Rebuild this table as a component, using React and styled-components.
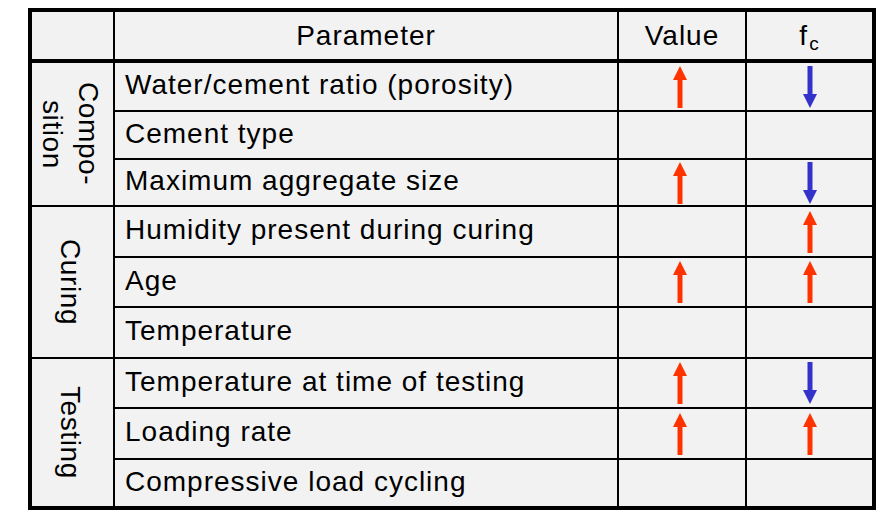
import React from "react";
import styled, { createGlobalStyle } from "styled-components";

const GlobalStyle = createGlobalStyle`
  body {
    margin: 0;
    background: #ffffff;
    font-family: "Liberation Sans", Arial, sans-serif;
    color: #000000;
  }
`;

const groups = [
  {
    label: ["Compo-", "sition"],
    rows: [
      ["Water/cement ratio (porosity)", "up", "down"],
      ["Cement type", null, null],
      ["Maximum aggregate size", "up", "down"],
    ],
  },
  {
    label: ["Curing"],
    rows: [
      ["Humidity present during curing", null, "up"],
      ["Age", "up", "up"],
      ["Temperature", null, null],
    ],
  },
  {
    label: ["Testing"],
    rows: [
      ["Temperature at time of testing", "up", "down"],
      ["Loading rate", "up", "up"],
      ["Compressive load cycling", null, null],
    ],
  },
];

// arrows are drawn shapes: up = red, down = blue
function Arrow({ dir }) {
  if (dir === "up") {
    return (
      <svg width="14" height="42" viewBox="0 0 14 42">
        <polygon points="7,0 14,14 0,14" fill="#ff3300" />
        <rect x="4.5" y="13" width="5" height="29" fill="#ff3300" />
      </svg>
    );
  }
  return (
    <svg width="14" height="42" viewBox="0 0 14 42">
      <rect x="4.5" y="0" width="5" height="29" fill="#3333cc" />
      <polygon points="0,28 14,28 7,42" fill="#3333cc" />
    </svg>
  );
}

export default function App() {
  return (
    <>
      <GlobalStyle />
      <Frame>
        <HeadCell />
        <HeadCell>Parameter</HeadCell>
        <HeadCell>Value</HeadCell>
        <HeadCell>
          f<Sub>c</Sub>
        </HeadCell>
        {groups.map((g) => (
          <React.Fragment key={g.label.join("")}>
            <GroupCell>
              <GroupLabel>
                {g.label.map((l, i) => (
                  <React.Fragment key={l}>
                    {i > 0 && <br />}
                    {l}
                  </React.Fragment>
                ))}
              </GroupLabel>
            </GroupCell>
            {g.rows.map(([name, value, fc]) => (
              <React.Fragment key={name}>
                <ParamCell>{name}</ParamCell>
                <MarkCell $offset={4}>{value && <Arrow dir={value} />}</MarkCell>
                <MarkCell>{fc && <Arrow dir={fc} />}</MarkCell>
              </React.Fragment>
            ))}
          </React.Fragment>
        ))}
      </Frame>
    </>
  );
}

const Frame = styled.div`
  margin: 8px 0 0 28px;
  width: 848px;
  height: 502px;
  box-sizing: border-box;
  border: 4px solid #000;
  background: #000;
  display: grid;
  grid-template-columns: 81px 502px 126px 125px;
  grid-template-rows: 49px 47px 46px 45px 49px 48px 49px 48px 49px 46px;
  gap: 2px;
  font-size: 28px;
  letter-spacing: 1px;
`;

const Cell = styled.div`
  background: #f2f2f2;
  display: flex;
  align-items: center;
  min-width: 0;
  overflow: hidden;
`;

const HeadCell = styled(Cell)`
  justify-content: center;
  box-sizing: border-box;
  border-bottom: 2px solid #000;
  white-space: nowrap;
`;

const Sub = styled.span`
  font-size: 19px;
  position: relative;
  top: 8px;
  margin-left: 1px;
`;

const GroupCell = styled(Cell)`
  grid-row: span 3;
  justify-content: center;
  padding-right: 6px;
`;

const GroupLabel = styled.div`
  writing-mode: vertical-rl;
  text-align: center;
  line-height: 36px;
  letter-spacing: 0.6px;
  white-space: nowrap;
`;

const ParamCell = styled(Cell)`
  padding: 0 0 3px 10px;
  white-space: nowrap;
`;

const MarkCell = styled(Cell)`
  justify-content: center;
  padding-right: ${({ $offset }) => $offset || 0}px;
`;
